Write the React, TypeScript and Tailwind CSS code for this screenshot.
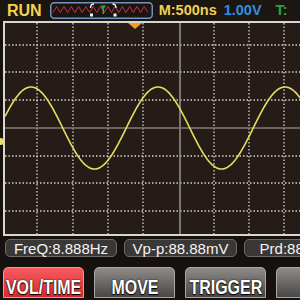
import React from 'react'

const GRID_X = [37, 73, 108, 143, 214, 249, 284]
const GRID_Y = [45, 72, 100, 156, 183, 211]

// yellow trace, page coords
const sinePath = () => {
  const pts: string[] = []
  for (let x = 5; x <= 323; x += 1) {
    const y = 128 - 41 * Math.sin((2 * Math.PI * (x + 0.75)) / 127)
    pts.push(`${x},${y.toFixed(2)}`)
  }
  return 'M' + pts.join(' L')
}

const zigzag = () => {
  const pts: string[] = []
  let up = false
  for (let x = 3; x <= 100; x += 3.65) {
    pts.push(`${x.toFixed(2)},${up ? 4.5 : 10.5}`)
    up = !up
  }
  return 'M' + pts.join(' L')
}

const MiniWave = () => (
  <svg width="103" height="17" viewBox="0 0 103 17" className="shrink-0">
    <rect x="0.75" y="0.75" width="101.5" height="15.5" rx="3.5" fill="#1b1512" stroke="#6f95c3" strokeWidth="1.5" />
    <path d={zigzag()} fill="none" stroke="#c8323a" strokeWidth="1" />
    {/* window brackets */}
    <path d="M40.5,6 Q40.5,2 44,2" fill="none" stroke="#f2f2f2" strokeWidth="1.4" />
    <path d="M62.5,2 Q66,2 66,6" fill="none" stroke="#f2f2f2" strokeWidth="1.4" />
    <rect x="40" y="11.5" width="3" height="3" fill="#f2f2f2" />
    <rect x="63.5" y="11.5" width="3" height="3" fill="#f2f2f2" />
    {/* trigger T */}
    <path d="M50.5,3.5 L56,3.5 L53.25,7.5 Z" fill="#2fa84a" />
    <rect x="52.5" y="6.5" width="1.6" height="5.5" fill="#2fa84a" />
  </svg>
)

const Scope = () => (
  <svg width="318" height="211" viewBox="5 23 318 211" className="block">
    {GRID_X.map((x) => (
      <line key={'v' + x} x1={x} y1={23} x2={x} y2={234} stroke="#d6d1cc" strokeWidth="1.3" strokeDasharray="1.5 2" />
    ))}
    {GRID_Y.map((y) => (
      <line key={'h' + y} x1={5} y1={y} x2={323} y2={y} stroke="#d6d1cc" strokeWidth="1.3" strokeDasharray="1.5 2" />
    ))}
    <line x1={180} y1={23} x2={180} y2={234} stroke="#9a948f" strokeWidth="1.5" />
    <line x1={5} y1={128} x2={323} y2={128} stroke="#7f7975" strokeWidth="1.6" />
    <path d={sinePath()} fill="none" stroke="#e9dd62" strokeWidth="1.6" />
    <path d="M128,23 L142,23 L135,29 Z" fill="#f49a2c" />
  </svg>
)

const btnText = 'inline-block scale-x-[0.76] text-[21px] font-bold leading-none text-white [text-shadow:0_0_2px_#000,0_1px_1px_#000]'

export default function App() {
  return (
    <div className="w-[300px] h-[300px] overflow-hidden bg-[#16110f] flex flex-col font-['Liberation_Sans',Arial,sans-serif]">
      {/* status bar */}
      <div className="h-[21px] shrink-0 flex items-center bg-[#1c1613] whitespace-nowrap">
        <span className="ml-[7px] text-[16px] font-bold leading-none text-[#f3d24c]">RUN</span>
        <span className="ml-[8px] flex">
          <MiniWave />
        </span>
        <span className="ml-[6px] text-[14.5px] font-bold leading-none text-[#f0d050]">M:500ns</span>
        <span className="ml-[7px] text-[14.5px] font-bold leading-none text-[#2f8fe0]">1.00V</span>
        <span className="ml-[14px] text-[14.5px] font-bold leading-none text-[#2aa046]">T:</span>
      </div>

      {/* screen */}
      <div className="relative h-[215px] shrink-0 flex">
        <span className="absolute left-0 top-[117px] w-[4px] h-[7px] rounded-r-full bg-[#e9dd62]" />
        <div className="ml-[3px] w-[320px] h-[215px] shrink-0 border-2 border-r-0 border-[#d9d5d1] bg-[#251c18] overflow-hidden">
          <Scope />
        </div>
      </div>

      {/* measurements */}
      <div className="mt-[3px] h-[18px] shrink-0 flex gap-[7px] pl-[5px] whitespace-nowrap">
        <div className="w-[112px] shrink-0 rounded-[5px] border border-[#6c6966] bg-[#3a3836] flex items-center justify-center text-[15px] leading-none text-[#f4f4f4]">
          FreQ:8.888Hz
        </div>
        <div className="w-[113px] shrink-0 rounded-[5px] border border-[#6c6966] bg-[#3a3836] flex items-center justify-center text-[15px] leading-none text-[#f4f4f4]">
          Vp-p:88.88mV
        </div>
        <div className="w-[112px] shrink-0 rounded-[5px] border border-[#6c6966] bg-[#3a3836] flex items-center justify-center text-[15px] leading-none text-[#f4f4f4]">
          Prd:88.88us
        </div>
      </div>

      {/* soft keys */}
      <div className="mt-[10px] flex gap-[10px] pl-[3px]">
        <div className="w-[81px] h-[31px] shrink-0 rounded-t-[5px] border border-[#ff8f92] bg-linear-to-b from-[#f55a5f] to-[#d9262e] flex justify-center pt-[8px] overflow-hidden">
          <span className={btnText}>VOL/TIME</span>
        </div>
        <div className="w-[81px] h-[31px] shrink-0 rounded-t-[5px] border border-[#a9a6a3] bg-linear-to-b from-[#8e8b89] to-[#4a4846] flex justify-center pt-[8px] overflow-hidden">
          <span className={btnText}>MOVE</span>
        </div>
        <div className="w-[81px] h-[31px] shrink-0 rounded-t-[5px] border border-[#a9a6a3] bg-linear-to-b from-[#8e8b89] to-[#4a4846] flex justify-center pt-[8px] overflow-hidden">
          <span className={btnText}>TRIGGER</span>
        </div>
        <div className="w-[81px] h-[31px] shrink-0 rounded-t-[5px] border border-[#a9a6a3] bg-linear-to-b from-[#8e8b89] to-[#4a4846]" />
      </div>
    </div>
  )
}
